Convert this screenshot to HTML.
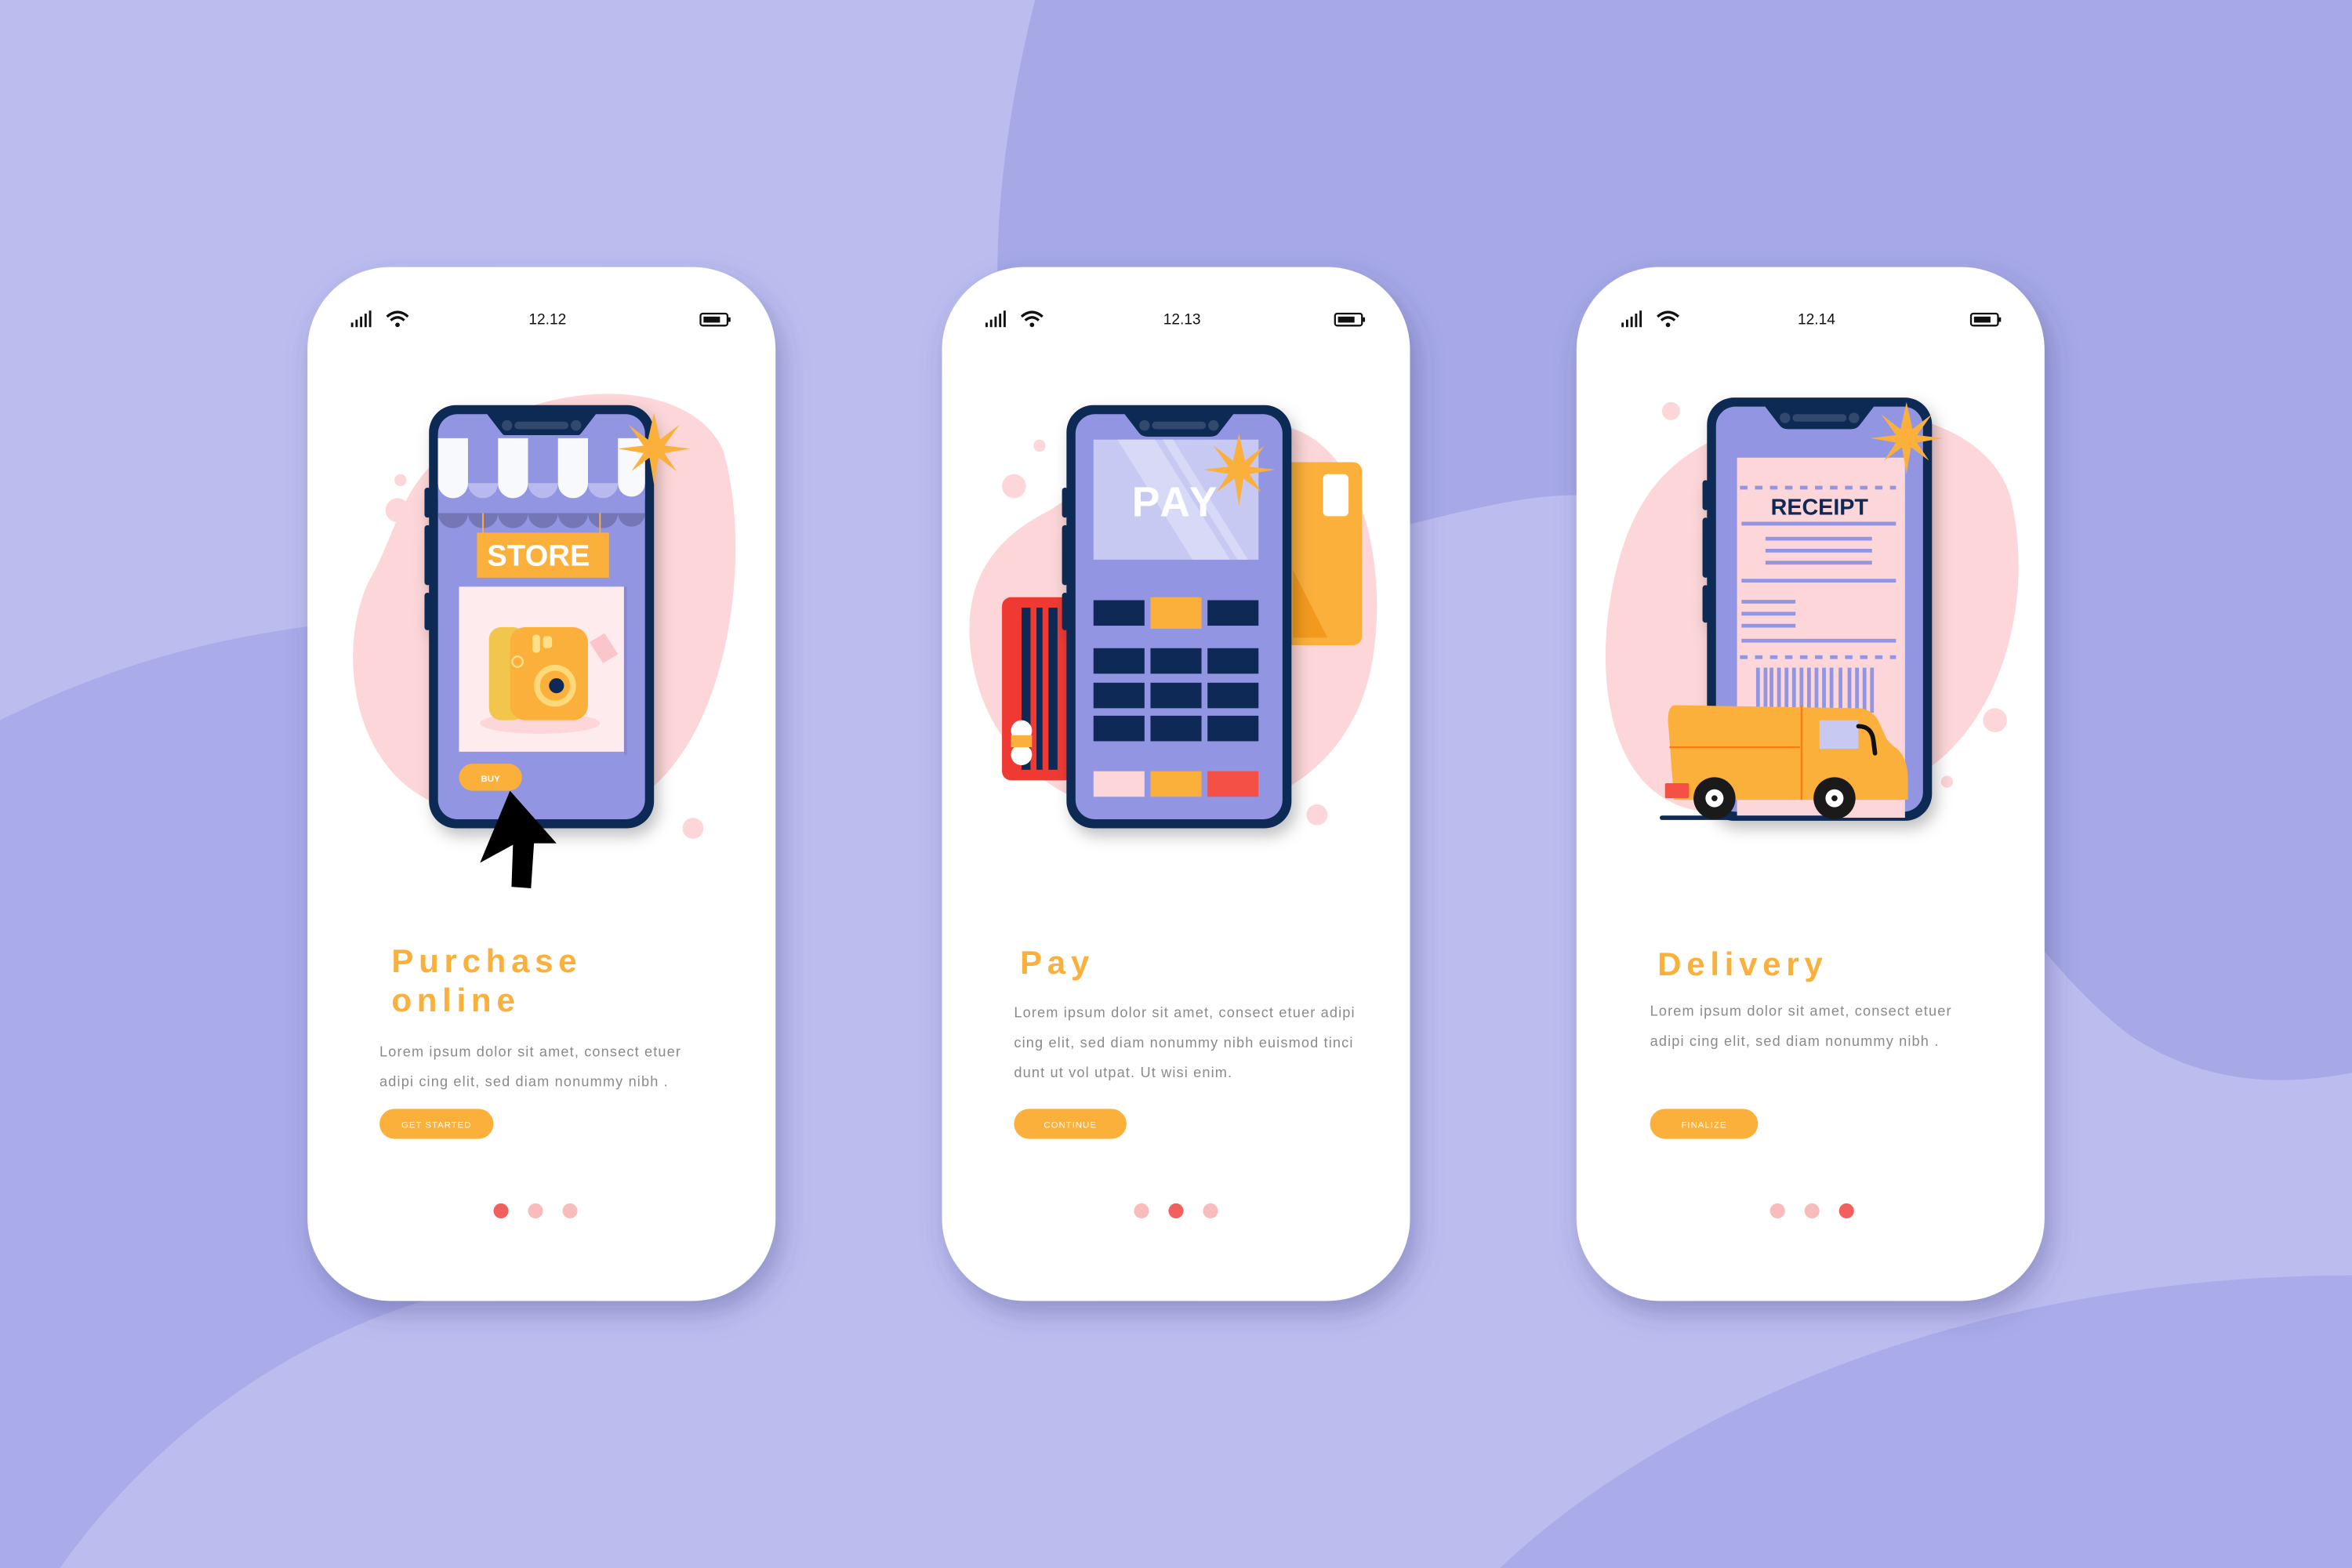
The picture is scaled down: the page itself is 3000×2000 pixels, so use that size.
<!DOCTYPE html>
<html><head><meta charset="utf-8"><style>
html,body{margin:0;padding:0;width:3000px;height:2000px;overflow:hidden;background:#bbbcee}
svg{display:block}
text{font-family:"Liberation Sans",sans-serif}
</style></head><body>
<svg width="3000" height="2000" viewBox="0 0 1568 1045" preserveAspectRatio="none" xmlns="http://www.w3.org/2000/svg">
<defs>
<filter id="sh" x="-20%" y="-20%" width="140%" height="140%"><feDropShadow dx="4" dy="8" stdDeviation="9" flood-color="#3a3d80" flood-opacity="0.35"/></filter>
<filter id="sh2" x="-20%" y="-20%" width="140%" height="140%"><feDropShadow dx="3" dy="5" stdDeviation="5" flood-color="#000" flood-opacity="0.25"/></filter>
<g id="phone">
<rect x="0" y="0" width="150" height="282" rx="18" fill="#0e2955"/>
<rect x="-3" y="55" width="4" height="20" rx="2" fill="#0e2955"/>
<rect x="-3" y="80" width="4" height="40" rx="2" fill="#0e2955"/>
<rect x="-3" y="125" width="4" height="25" rx="2" fill="#0e2955"/>
<rect x="6" y="6" width="138" height="270" rx="13" fill="#9296e2"/>
<path d="M38 5 L48 18 Q50 21 54 21 L96 21 Q100 21 102 18 L112 5 Z" fill="#0e2955"/>
<rect x="57" y="11" width="36" height="5" rx="2.5" fill="#33496e"/>
<circle cx="52" cy="13.5" r="3.5" fill="#33496e"/><circle cx="98" cy="13.5" r="3.5" fill="#33496e"/>
</g>
<polygon id="star" points="0,-24 4,-6 17,-16 7,-2 24,0 7,3 15,15 3,6 0,24 -3,6 -15,15 -7,3 -24,0 -7,-2 -17,-16 -4,-6" fill="#fbb03b"/>
<g id="status">
<rect x="0" y="6" width="1.5" height="3" fill="#111"/><rect x="3" y="4" width="1.5" height="5" fill="#111"/><rect x="6" y="2" width="1.5" height="7" fill="#111"/><rect x="9" y="0" width="1.5" height="9" fill="#111"/><rect x="12" y="-2" width="1.5" height="11" fill="#111"/>
<path d="M24 2 Q31 -4 38 2 M26.5 4.5 Q31 0.5 35.5 4.5" stroke="#111" stroke-width="1.7" fill="none"/><circle cx="31" cy="7.5" r="1.5" fill="#111"/>
<rect x="233" y="0" width="18" height="8" rx="1.5" fill="none" stroke="#111" stroke-width="1.2"/><rect x="235" y="2" width="11" height="4" fill="#111"/><rect x="251.5" y="2.5" width="1.5" height="3" fill="#111"/>
</g>
</defs>
<rect width="1568" height="1045" fill="#bcbdef"/>
<path d="M690 0 C660 120 650 250 700 330 C800 420 950 330 1050 330 C1200 330 1300 600 1420 690 C1480 730 1540 720 1568 715 L1568 0 Z" fill="#a6a9e6"/>
<path d="M0 480 C100 430 200 410 330 410 L330 855 C200 880 100 960 40 1045 L0 1045 Z" fill="#aaace9"/>
<path d="M1000 1045 C1100 950 1300 850 1568 850 L1568 1045 Z" fill="#a9ace8"/>

<g filter="url(#sh)">
<rect x="205" y="178" width="312" height="689" rx="55" fill="#fff"/>
<rect x="628" y="178" width="312" height="689" rx="55" fill="#fff"/>
<rect x="1051" y="178" width="312" height="689" rx="55" fill="#fff"/>
</g>

<use href="#status" x="234" y="209"/>
<use href="#status" x="657" y="209"/>
<use href="#status" x="1081" y="209"/>
<text x="365" y="216" font-size="10" text-anchor="middle" fill="#111">12.12</text>
<text x="788" y="216" font-size="10" text-anchor="middle" fill="#111">12.13</text>
<text x="1211" y="216" font-size="10" text-anchor="middle" fill="#111">12.14</text>

<!-- Card 1 -->
<path d="M300 300 C360 250 460 250 482 300 C500 360 490 470 440 520 C400 560 330 560 280 530 C230 500 225 420 250 380 C265 350 270 320 300 300 Z" fill="#fcd6d8"/>
<circle cx="265" cy="340" r="8" fill="#fcd6d8"/><circle cx="267" cy="320" r="4" fill="#fcd6d8"/><circle cx="462" cy="552" r="7" fill="#fcd6d8"/>
<g filter="url(#sh2)"><use href="#phone" x="286" y="270"/></g>
<g>
<rect x="292" y="290" width="138" height="42" fill="#9296e2"/>
<path d="M292 332 a10 10 0 0 0 20 0 a10 10 0 0 0 20 0 a10 10 0 0 0 20 0 a10 10 0 0 0 20 0 a10 10 0 0 0 20 0 a10 10 0 0 0 20 0 a9 9 0 0 0 18 0 Z" transform="translate(0,10)" fill="#7476b6"/>
<path d="M292 322 a10 10 0 0 0 20 0 a10 10 0 0 0 20 0 a10 10 0 0 0 20 0 a10 10 0 0 0 20 0 a10 10 0 0 0 20 0 a10 10 0 0 0 20 0 a9 9 0 0 0 18 0 Z" fill="#b8baef"/>
<path d="M292 292 h20 v30 a10 10 0 0 1 -20 0 Z" fill="#f8f9fc"/>
<path d="M332 292 h20 v30 a10 10 0 0 1 -20 0 Z" fill="#f8f9fc"/>
<path d="M372 292 h20 v30 a10 10 0 0 1 -20 0 Z" fill="#f8f9fc"/>
<path d="M412 292 h18 v30 a9 9 0 0 1 -18 0 Z" fill="#f8f9fc"/>
</g>
<line x1="322" y1="342" x2="322" y2="356" stroke="#fbb03b" stroke-width="1"/><line x1="400" y1="342" x2="400" y2="356" stroke="#fbb03b" stroke-width="1"/>
<rect x="318" y="355" width="88" height="30" fill="#fbb03b"/>
<text x="359" y="377" font-size="20" font-weight="bold" fill="#fff" text-anchor="middle">STORE</text>
<rect x="306" y="391" width="110" height="110" fill="#fdebed"/>
<rect x="416" y="391" width="2" height="112" fill="#8b86cc"/>
<ellipse cx="360" cy="482" rx="40" ry="7" fill="#fcd6d8"/>
<rect x="326" y="418" width="24" height="62" rx="8" fill="#f2c64c"/>
<rect x="340" y="418" width="52" height="62" rx="10" fill="#fbb03b"/>
<circle cx="370" cy="457" r="14" fill="#fdd97a"/><circle cx="370" cy="457" r="10" fill="#fbb03b"/><circle cx="371" cy="457" r="5" fill="#0e2955"/>
<rect x="355" y="423" width="5" height="12" rx="2" fill="#fde08a"/><rect x="362" y="424" width="6" height="8" rx="2" fill="#fde08a"/>
<circle cx="345" cy="441" r="3.5" fill="none" stroke="#fde08a" stroke-width="1.2"/>
<polygon points="393,428 403,422 412,436 402,442" fill="#fbc5cc"/>
<rect x="306" y="509" width="42" height="18" rx="9" fill="#fbb03b"/>
<text x="327" y="521" font-size="6" font-weight="bold" fill="#fff" text-anchor="middle">BUY</text>
<use href="#star" x="436" y="299"/>
<polygon points="340,527 371,562 356,562 354,592 341,591 342,563 320,575" fill="#000"/>
<text x="261" y="648" font-size="22" font-weight="bold" fill="#fbb03b" letter-spacing="3.5">Purchase</text>
<text x="261" y="674" font-size="22" font-weight="bold" fill="#fbb03b" letter-spacing="3.5">online</text>
<text x="253" y="704" font-size="9.5" fill="#8a8a8a" letter-spacing="0.6">Lorem ipsum dolor sit amet, consect etuer</text>
<text x="253" y="724" font-size="9.5" fill="#8a8a8a" letter-spacing="0.6">adipi cing elit, sed diam nonummy nibh .</text>
<rect x="253" y="739" width="76" height="20" rx="10" fill="#fbb03b"/>
<text x="291" y="751.5" font-size="6" fill="#fff" text-anchor="middle" letter-spacing="0.5">GET STARTED</text>
<circle cx="334" cy="807" r="5" fill="#f2605d"/><circle cx="357" cy="807" r="5" fill="#f9bcbc"/><circle cx="380" cy="807" r="5" fill="#f9bcbc"/>

<!-- Card 2 -->
<path d="M700 340 C760 300 800 280 860 285 C910 300 925 380 915 440 C905 500 860 540 790 545 C720 550 660 510 648 440 C640 390 660 360 700 340 Z" fill="#fcd6d8"/>
<circle cx="676" cy="324" r="8" fill="#fcd6d8"/><circle cx="693" cy="297" r="4" fill="#fcd6d8"/><circle cx="878" cy="543" r="7" fill="#fcd6d8"/>
<rect x="668" y="398" width="48" height="122" rx="6" fill="#ee3a33"/>
<rect x="681" y="405" width="6" height="108" fill="#0e2955"/><rect x="691" y="405" width="4" height="108" fill="#0e2955"/><rect x="699" y="405" width="6" height="108" fill="#0e2955"/>
<circle cx="681" cy="487" r="7" fill="#fff"/><circle cx="681" cy="503" r="7" fill="#fff"/><rect x="674" y="490" width="14" height="8" fill="#fbb03b"/>
<rect x="855" y="308" width="53" height="122" rx="6" fill="#fbb03b"/>
<rect x="882" y="316" width="17" height="28" rx="3" fill="#fff"/>
<polygon points="862,380 885,425 862,425" fill="#f39a1e"/>
<g filter="url(#sh2)"><use href="#phone" x="711" y="270"/></g>
<rect x="729" y="293" width="110" height="80" fill="#c7c9f2"/>
<polygon points="745,293 770,293 820,373 795,373" fill="#d8d9f7"/><polygon points="775,293 782,293 832,373 825,373" fill="#d8d9f7"/>
<text x="784" y="344" font-size="28" font-weight="bold" fill="#fff" text-anchor="middle" letter-spacing="2">PAY</text>
<use href="#star" x="826" y="313"/>
<g fill="#0e2955">
<rect x="729" y="400" width="34" height="17"/><rect x="805" y="400" width="34" height="17"/>
<rect x="729" y="432" width="34" height="17"/><rect x="767" y="432" width="34" height="17"/><rect x="805" y="432" width="34" height="17"/>
<rect x="729" y="455" width="34" height="17"/><rect x="767" y="455" width="34" height="17"/><rect x="805" y="455" width="34" height="17"/>
<rect x="729" y="477" width="34" height="17"/><rect x="767" y="477" width="34" height="17"/><rect x="805" y="477" width="34" height="17"/>
</g>
<rect x="767" y="398" width="34" height="21" fill="#fbb03b"/>
<rect x="729" y="514" width="34" height="17" fill="#fcd6d8"/><rect x="767" y="514" width="34" height="17" fill="#fbb03b"/><rect x="805" y="514" width="34" height="17" fill="#f45046"/>
<text x="680" y="649" font-size="22" font-weight="bold" fill="#fbb03b" letter-spacing="3.5">Pay</text>
<text x="676" y="678" font-size="9.5" fill="#8a8a8a" letter-spacing="0.6">Lorem ipsum dolor sit amet, consect etuer adipi</text>
<text x="676" y="698" font-size="9.5" fill="#8a8a8a" letter-spacing="0.6">cing elit, sed diam nonummy nibh euismod tinci</text>
<text x="676" y="718" font-size="9.5" fill="#8a8a8a" letter-spacing="0.6">dunt ut vol utpat. Ut wisi enim.</text>
<rect x="676" y="739" width="75" height="20" rx="10" fill="#fbb03b"/>
<text x="713.5" y="751.5" font-size="6" fill="#fff" text-anchor="middle" letter-spacing="0.5">CONTINUE</text>
<circle cx="761" cy="807" r="5" fill="#f9bcbc"/><circle cx="784" cy="807" r="5" fill="#f2605d"/><circle cx="807" cy="807" r="5" fill="#f9bcbc"/>

<!-- Card 3 -->
<path d="M1150 290 C1220 260 1320 270 1340 330 C1355 390 1340 460 1300 500 C1260 540 1190 545 1130 540 C1080 530 1065 470 1072 410 C1080 350 1100 310 1150 290 Z" fill="#fcd6d8"/>
<circle cx="1114" cy="274" r="6" fill="#fcd6d8"/><circle cx="1330" cy="480" r="8" fill="#fcd6d8"/><circle cx="1298" cy="521" r="4" fill="#fcd6d8"/>
<g filter="url(#sh2)"><use href="#phone" x="1138" y="265"/></g>
<rect x="1158" y="305" width="112" height="240" fill="#fcd6d8"/>
<line x1="1160" y1="325" x2="1264" y2="325" stroke="#9296e2" stroke-width="2.5" stroke-dasharray="5 5"/>
<text x="1213" y="343" font-size="15" font-weight="bold" fill="#0e2955" text-anchor="middle">RECEIPT</text>
<g stroke="#9296e2" stroke-width="2.5">
<line x1="1161" y1="349" x2="1264" y2="349"/>
<line x1="1177" y1="359" x2="1248" y2="359"/><line x1="1177" y1="367" x2="1248" y2="367"/><line x1="1177" y1="375" x2="1248" y2="375"/>
<line x1="1161" y1="387" x2="1264" y2="387"/>
<line x1="1161" y1="401" x2="1197" y2="401"/><line x1="1161" y1="409" x2="1197" y2="409"/><line x1="1161" y1="417" x2="1197" y2="417"/>
<line x1="1161" y1="427" x2="1264" y2="427"/>
</g>
<line x1="1160" y1="438" x2="1264" y2="438" stroke="#9296e2" stroke-width="2.5" stroke-dasharray="5 5"/>
<path d="M1172 445v30M1177 445v30M1181 445v30M1186 445v30M1191 445v30M1196 445v30M1201 445v30M1206 445v30M1211 445v30M1216 445v30M1221 445v30M1227 445v30M1233 445v30M1238 445v30M1243 445v30M1248 445v30" stroke="#9296e2" stroke-width="2.5"/>
<use href="#star" x="1271" y="292"/>
<line x1="1108" y1="545" x2="1220" y2="545" stroke="#0e2955" stroke-width="3" stroke-linecap="round"/>
<path d="M1117 470 L1240 472 Q1248 473 1252 480 L1258 493 L1262 497 Q1272 503 1272 520 L1272 533 L1116 533 L1112 480 Q1112 470 1117 470 Z" fill="#fbb03b"/>
<line x1="1113" y1="498" x2="1200" y2="498" stroke="#f77d0f" stroke-width="1.2"/>
<line x1="1201" y1="470" x2="1201" y2="533" stroke="#f77d0f" stroke-width="1.2"/>
<rect x="1213" y="480" width="26" height="19" fill="#c7c9f2"/>
<path d="M1239 484 Q1248 484 1249 494 L1250 502" stroke="#111" stroke-width="3" fill="none" stroke-linecap="round"/>
<rect x="1110" y="522" width="16" height="10" rx="1" fill="#f45046"/>
<circle cx="1143" cy="532" r="14" fill="#1a1a1a"/><circle cx="1143" cy="532" r="6" fill="#fff"/><circle cx="1143" cy="532" r="2" fill="#1a1a1a"/>
<circle cx="1223" cy="532" r="14" fill="#1a1a1a"/><circle cx="1223" cy="532" r="6" fill="#fff"/><circle cx="1223" cy="532" r="2" fill="#1a1a1a"/>
<text x="1105" y="650" font-size="22" font-weight="bold" fill="#fbb03b" letter-spacing="3.5">Delivery</text>
<text x="1100" y="677" font-size="9.5" fill="#8a8a8a" letter-spacing="0.6">Lorem ipsum dolor sit amet, consect etuer</text>
<text x="1100" y="697" font-size="9.5" fill="#8a8a8a" letter-spacing="0.6">adipi cing elit, sed diam nonummy nibh .</text>
<rect x="1100" y="739" width="72" height="20" rx="10" fill="#fbb03b"/>
<text x="1136" y="751.5" font-size="6" fill="#fff" text-anchor="middle" letter-spacing="0.5">FINALIZE</text>
<circle cx="1185" cy="807" r="5" fill="#f9bcbc"/><circle cx="1208" cy="807" r="5" fill="#f9bcbc"/><circle cx="1231" cy="807" r="5" fill="#f2605d"/>
</svg>
</body></html>
